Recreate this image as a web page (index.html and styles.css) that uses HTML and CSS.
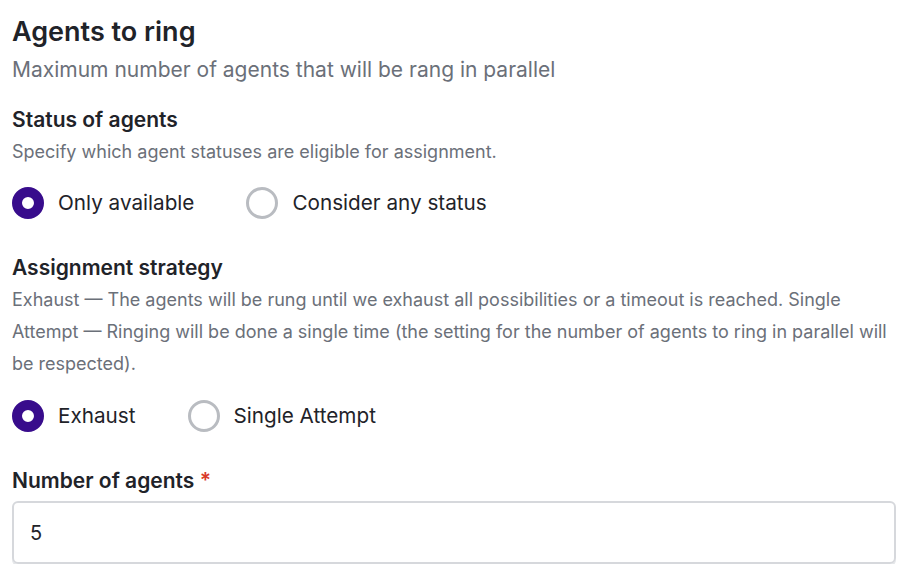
FILE: index.html
```html
<!DOCTYPE html>
<html lang="en">
<head>
<meta charset="utf-8">
<title>Agents to ring</title>
<link rel="stylesheet" href="styles.css">
</head>
<body>
<main class="form">
  <header class="section-head">
    <h1 class="title">Agents to ring</h1>
    <p class="subtitle">Maximum number of agents that will be rang in parallel</p>
  </header>

  <section class="field">
    <h2 class="label">Status of agents</h2>
    <p class="hint">Specify which agent statuses are eligible for assignment.</p>
    <div class="radio-group">
      <label class="radio"><span class="dot checked"></span><span class="radio-text">Only available</span></label>
      <label class="radio"><span class="dot"></span><span class="radio-text">Consider any status</span></label>
    </div>
  </section>

  <section class="field">
    <h2 class="label">Assignment strategy</h2>
    <p class="hint hint-long">Exhaust — The agents will be rung until we exhaust all possibilities or a timeout is reached. Single Attempt — Ringing will be done a single time (the setting for the number of agents to ring in parallel will be respected).</p>
    <div class="radio-group">
      <label class="radio"><span class="dot checked"></span><span class="radio-text">Exhaust</span></label>
      <label class="radio"><span class="dot"></span><span class="radio-text">Single Attempt</span></label>
    </div>
  </section>

  <section class="field">
    <h2 class="label">Number of agents <span class="req">*</span></h2>
    <div class="input">5</div>
  </section>
</main>
</body>
</html>
```

FILE: styles.css
```css
* { box-sizing: border-box; }
html, body { margin: 0; padding: 0; background: #ffffff; }
body {
  font-family: Inter, Roboto, "Liberation Sans", sans-serif;
  color: #1f2329;
}
.form {
  padding: 16px 18px 0 12px;
  display: flex;
  flex-direction: column;
}
.title {
  margin: 0;
  font-size: 27px;
  line-height: 32px;
  font-weight: 600;
}
.subtitle {
  margin: 7px 0 0;
  font-size: 21px;
  line-height: 30px;
  color: #6b7079;
}
.field { margin-top: 21px; }
.field + .field { margin-top: 35px; }
.label {
  margin: 0;
  font-size: 21px;
  line-height: 28px;
  font-weight: 600;
}
.req { color: #d93a2b; }
.hint {
  margin: 4px 0 0;
  font-size: 18px;
  line-height: 28px;
  color: #6b7079;
}
.hint-long { line-height: 32px; margin-top: 2px; }
.radio-group {
  display: flex;
  gap: 52px;
  margin-top: 21px;
}
.hint-long + .radio-group { margin-top: 20px; }
.radio {
  display: flex;
  align-items: center;
  gap: 14px;
}
.dot {
  width: 32px;
  height: 32px;
  border-radius: 50%;
  border: 3px solid #b9bcc1;
  background: #fff;
}
.dot.checked {
  border: 10px solid #380c8c;
}
.radio-text {
  font-size: 20.7px;
  line-height: 32px;
}
.input {
  margin-top: 6px;
  height: 63px;
  border: 2px solid #d6d8dc;
  border-radius: 6px;
  padding: 0 0 0 16px;
  display: flex;
  align-items: center;
  font-size: 20px;
  box-shadow: 0 2px 0 #e4e6e9;
}
```
